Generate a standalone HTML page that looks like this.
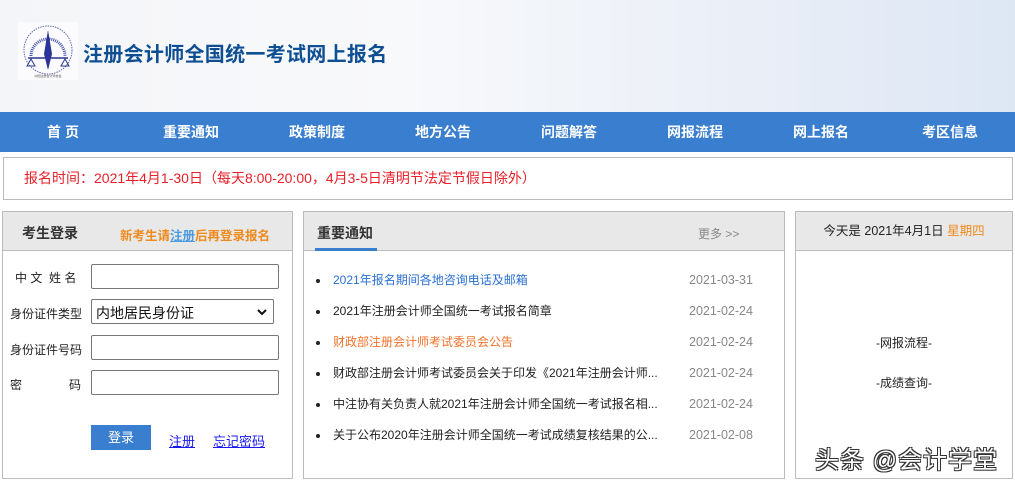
<!DOCTYPE html>
<html><head><meta charset="utf-8"><style>
*{margin:0;padding:0;box-sizing:border-box}
body{width:1015px;height:483px;overflow:hidden;background:#fff;font-family:"Liberation Sans","Noto Sans CJK SC",sans-serif;font-size:13px;color:#222;position:relative}
.a{position:absolute}
#hd{left:0;top:0;width:1015px;height:112px;background:linear-gradient(90deg,#f4f5f8 0%,#f8f9fb 40%,#e9eef7 75%,#dde7f4 100%)}
#title{left:83px;top:38px;font-size:20px;font-weight:bold;color:#0e4f94;letter-spacing:0.3px}
#nav{left:0;top:112px;width:1015px;height:40px;background:#397ecf}
#nav span{position:absolute;top:0;line-height:40px;color:#fff;font-weight:bold;font-size:14px;transform:translateX(-50%);white-space:nowrap}
#notice{left:3px;top:157px;width:1010px;height:43px;border:1px solid #bbb;color:#e8202a;font-size:14px;line-height:41px;padding-left:20px}
.pn{top:211px;height:268px;border:1px solid #bbb;background:#fff}
.ph{position:absolute;left:0;top:0;right:0;height:39px;background:#e8e8e8;border-bottom:1px solid #bbb}
.inp{position:absolute;left:91px;width:188px;height:25px;border:1px solid #777;border-radius:2px;background:#fff}
.lb{position:absolute;left:10px;font-size:12px;color:#222}
.li{position:absolute;left:316px;font-size:12px;line-height:14px;white-space:nowrap}
.li:before{content:"";position:absolute;left:0;top:6px;width:4px;height:4px;border-radius:2px;background:#222}
.li span{margin-left:17px}
.dt{position:absolute;left:689px;font-size:12.5px;line-height:14px;color:#888}
</style></head><body>
<div id="hd" class="a"></div>
<svg class="a" style="left:18px;top:22px" width="60" height="58" viewBox="0 0 60 58">
<rect width="60" height="58" fill="#fbfbfd"/>
<circle cx="30" cy="28" r="24" fill="none" stroke="#5d6ab0" stroke-width="1" stroke-dasharray="1.5 1"/>
<path d="M13 34 A17 17 0 0 1 47 34" fill="none" stroke="#4450a8" stroke-width="3" stroke-dasharray="1 1"/>
<path d="M30 8 L34 32 L30 48 L26 32 Z" fill="#2b3595"/>
<path d="M10 36 H50" stroke="#2b3595" stroke-width="1.5"/>
<path d="M9 44 L13 37 L17 44 Z M43 44 L47 37 L51 44 Z" fill="none" stroke="#2b3595"/>
<text x="30" y="55" font-size="3" fill="#555" text-anchor="middle">中国注册会计师协会</text>
</svg>
<div id="title" class="a">注册会计师全国统一考试网上报名</div>
<div id="nav" class="a">
<span style="left:63px">首 页</span><span style="left:191px">重要通知</span><span style="left:317px">政策制度</span><span style="left:443px">地方公告</span><span style="left:569px">问题解答</span><span style="left:695px">网报流程</span><span style="left:821px">网上报名</span><span style="left:950px">考区信息</span>
</div>
<div id="notice" class="a">报名时间：2021年4月1-30日（每天8:00-20:00，4月3-5日清明节法定节假日除外）</div>

<div class="a pn" style="left:2px;width:291px">
<div class="ph"><span class="a" style="left:19px;top:11px;font-size:14px;color:#333;font-weight:bold">考生登录</span><span class="a" style="left:117px;top:13px;font-size:12.5px;color:#f08a1c;font-weight:bold">新考生请<span style="color:#4a9be0;text-decoration:underline">注册</span>后再登录报名</span></div>
</div>
<span class="lb a" style="left:15px;top:269px">中 文&nbsp;&nbsp;姓 名</span>
<span class="lb a" style="top:305px">身份证件类型</span>
<span class="lb a" style="top:341px">身份证件号码</span>
<span class="lb a" style="top:376px">密</span><span class="lb a" style="left:69px;top:376px">码</span>
<div class="inp" style="top:264px"></div>
<div class="inp" style="top:299px;width:183px;font-size:14px;padding:3px 4px;color:#111">内地居民身份证<svg class="a" style="right:6px;top:9px" width="10" height="7"><path d="M1 1 L5 5 L9 1" fill="none" stroke="#111" stroke-width="2"/></svg></div>
<div class="inp" style="top:335px"></div>
<div class="inp" style="top:370px"></div>
<div class="a" style="left:91px;top:425px;width:60px;height:25px;background:#397ecf;color:#fff;text-align:center;line-height:25px;font-size:13px">登录</div>
<span class="a" style="left:169px;top:431px;font-size:13px;color:#1a1aee;text-decoration:underline">注册</span>
<span class="a" style="left:213px;top:431px;font-size:13px;color:#1a1aee;text-decoration:underline">忘记密码</span>

<div class="a pn" style="left:303px;width:482px">
<div class="ph"><span class="a" style="left:13px;top:11px;font-size:14px;color:#333;font-weight:bold">重要通知</span><span class="a" style="left:11px;top:36px;width:62px;height:3px;background:#397ecf"></span><span class="a" style="left:394px;top:13px;font-size:12px;color:#888">更多 &gt;&gt;</span></div>
</div>
<div class="li" style="top:273px;color:#2a6fd1"><span>2021年报名期间各地咨询电话及邮箱</span></div>
<div class="li" style="top:304px"><span>2021年注册会计师全国统一考试报名简章</span></div>
<div class="li" style="top:335px;color:#f2722a"><span>财政部注册会计师考试委员会公告</span></div>
<div class="li" style="top:366px"><span>财政部注册会计师考试委员会关于印发《2021年注册会计师...</span></div>
<div class="li" style="top:397px"><span>中注协有关负责人就2021年注册会计师全国统一考试报名相...</span></div>
<div class="li" style="top:428px"><span>关于公布2020年注册会计师全国统一考试成绩复核结果的公...</span></div>
<div class="dt" style="top:273px">2021-03-31</div>
<div class="dt" style="top:304px">2021-02-24</div>
<div class="dt" style="top:335px">2021-02-24</div>
<div class="dt" style="top:366px">2021-02-24</div>
<div class="dt" style="top:397px">2021-02-24</div>
<div class="dt" style="top:428px">2021-02-08</div>

<div class="a pn" style="left:795px;width:218px">
<div class="ph" style="text-align:center;line-height:39px;font-size:12.5px">今天是 2021年4月1日 <span style="color:#f08a1c">星期四</span></div>
</div>
<div class="a" style="left:795px;top:334px;width:218px;text-align:center;font-size:12px">-网报流程-</div>
<div class="a" style="left:795px;top:374px;width:218px;text-align:center;font-size:12px">-成绩查询-</div>
<div class="a" style="left:815px;top:440px;font-size:24px;letter-spacing:1px;color:#fff;text-shadow:1px 1px 0 #333,-1px -1px 0 #333,1px -1px 0 #333,-1px 1px 0 #333;white-space:nowrap">头条 @会计学堂</div>
</body></html>
